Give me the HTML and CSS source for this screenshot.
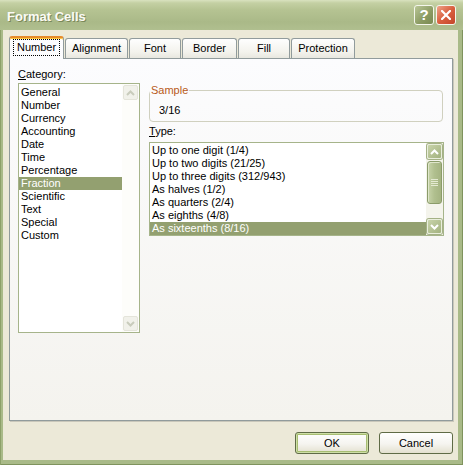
FILE: index.html
```html
<!DOCTYPE html>
<html>
<head>
<meta charset="utf-8">
<title>Format Cells</title>
<link rel="stylesheet" href="styles.css">
</head>
<body>
<div class="window">
  <div class="titlebar">
    <span class="title">Format Cells</span>
    <div class="caption-buttons">
      <span class="cap-btn help">?</span>
      <span class="cap-btn close">
        <svg width="10" height="10" viewBox="0 0 10 10"><path d="M1 1 L9 9 M9 1 L1 9" stroke="#fff" stroke-width="2.2" fill="none" stroke-linecap="square"/></svg>
      </span>
    </div>
  </div>
  <div class="client">
    <div class="tabs">
      <div class="tab active tab-number"><span class="focus">Number</span></div>
      <div class="tab tab-alignment">Alignment</div>
      <div class="tab tab-font">Font</div>
      <div class="tab tab-border">Border</div>
      <div class="tab tab-fill">Fill</div>
      <div class="tab tab-protection">Protection</div>
    </div>
    <div class="panel">
      <div class="col-left">
        <div class="label"><u>C</u>ategory:</div>
        <div class="listbox cat-list">
          <ul class="items">
            <li>General</li>
            <li>Number</li>
            <li>Currency</li>
            <li>Accounting</li>
            <li>Date</li>
            <li>Time</li>
            <li>Percentage</li>
            <li class="selected">Fraction</li>
            <li>Scientific</li>
            <li>Text</li>
            <li>Special</li>
            <li>Custom</li>
          </ul>
          <div class="scrollbar disabled">
            <div class="sb-btn"><svg width="9" height="6" viewBox="0 0 9 6"><path d="M1 5 L4.5 1.5 L8 5" fill="none" stroke="#c9ccbc" stroke-width="2"/></svg></div>
            <div class="sb-track"></div>
            <div class="sb-btn"><svg width="9" height="6" viewBox="0 0 9 6"><path d="M1 1 L4.5 4.5 L8 1" fill="none" stroke="#c9ccbc" stroke-width="2"/></svg></div>
          </div>
        </div>
      </div>
      <div class="col-right">
        <fieldset class="sample">
          <legend>Sample</legend>
          <div class="sample-value">3/16</div>
        </fieldset>
        <div class="label type-label"><u>T</u>ype:</div>
        <div class="listbox type-list">
          <ul class="items">
            <li>Up to one digit (1/4)</li>
            <li>Up to two digits (21/25)</li>
            <li>Up to three digits (312/943)</li>
            <li>As halves (1/2)</li>
            <li>As quarters (2/4)</li>
            <li>As eighths (4/8)</li>
            <li class="selected">As sixteenths (8/16)</li>
          </ul>
          <div class="scrollbar enabled">
            <div class="sb-btn"><svg width="9" height="6" viewBox="0 0 9 6"><path d="M1 5 L4.5 1.5 L8 5" fill="none" stroke="#fff" stroke-width="2"/></svg></div>
            <div class="sb-thumb">
              <svg width="7" height="8" viewBox="0 0 7 8"><path d="M0 0.5 H7 M0 2.5 H7 M0 4.5 H7 M0 6.5 H7" stroke="#e4ead2" stroke-width="1"/></svg>
            </div>
            <div class="sb-track"></div>
            <div class="sb-btn"><svg width="9" height="6" viewBox="0 0 9 6"><path d="M1 1 L4.5 4.5 L8 1" fill="none" stroke="#fff" stroke-width="2"/></svg></div>
          </div>
        </div>
      </div>
    </div>
    <div class="footer">
      <button class="btn default">OK</button>
      <button class="btn">Cancel</button>
    </div>
  </div>
</div>
</body>
</html>
```

FILE: styles.css
```css
body {
  margin: 0;
  font-family: "Liberation Sans", Arial, sans-serif;
  font-size: 11px;
  color: #000;
}

.window {
  width: 463px;
  height: 465px;
  display: flex;
  flex-direction: column;
  background: #a9ba88;
  box-shadow: inset 1px 0 0 #8da16a, inset -1px -1px 0 #7f935d;
}

.titlebar {
  height: 30px;
  flex: none;
  display: flex;
  align-items: flex-start;
  background: linear-gradient(#d9e2bf 0, #c4d0a3 3px, #b5c392 10px, #aab988 22px, #b0bf8f 30px);
}

.title {
  margin: 9px 0 0 7px;
  font-weight: bold;
  font-size: 13px;
  line-height: 15px;
  color: #fbfbf6;
  text-shadow: 1px 1px 0 #7a8858;
}

.caption-buttons {
  margin: 5px 7px 0 auto;
  display: flex;
  gap: 2px;
}

.cap-btn {
  width: 20px;
  height: 20px;
  box-sizing: border-box;
  border: 1px solid #f4f6ec;
  border-radius: 3px;
  display: flex;
  align-items: center;
  justify-content: center;
}

.help {
  background: linear-gradient(135deg, #b9c696, #8a9a62 60%, #7a8a52);
  color: #fff;
  font-weight: bold;
  font-size: 15px;
  line-height: 18px;
}

.close {
  background: linear-gradient(135deg, #eea48a, #d9603f 50%, #c4452a);
}

.client {
  flex: 1;
  margin: 0 5px 5px 3px;
  background: #ece9d8;
  padding: 6px 5px 0 6px;
  display: flex;
  flex-direction: column;
}

.tabs {
  display: flex;
  align-items: flex-end;
  height: 23px;
  margin-bottom: -1px;
  gap: 1px;
  flex: none;
}

.tab {
  height: 20px;
  box-sizing: border-box;
  margin-bottom: 1px;
  border: 1px solid #919b9c;
  border-bottom: none;
  border-radius: 3px 3px 0 0;
  background: linear-gradient(#fefefe, #f3f2ec 70%, #e8e7df);
  padding-top: 3px;
  text-align: center;
  line-height: 13px;
}

.tab.active {
  height: 23px;
  margin-bottom: 0;
  border-top: 2px solid #e68b2c;
  box-shadow: inset 0 1px 0 #ffc73c;
  background: #fcfcfe;
  padding-top: 3px;
  position: relative;
  z-index: 1;
}

.focus {
  display: inline-block;
  padding: 0 2px;
  outline: 1px dotted #000;
  outline-offset: 1px;
}

.tab-number { width: 55px; }
.tab-alignment { width: 63px; }
.tab-font { width: 52px; }
.tab-border { width: 55px; }
.tab-fill { width: 52px; }
.tab-protection { width: 64px; }

.panel {
  height: 363px;
  flex: none;
  box-sizing: border-box;
  border: 1px solid #919b9c;
  background: linear-gradient(#fcfcfe, #f4f3ee);
  box-shadow: 1px 1px 0 #c9c7ba;
  display: flex;
  gap: 9px;
  padding: 9px 8px 0 8px;
}

.col-left {
  width: 122px;
  display: flex;
  flex-direction: column;
}

.col-right {
  width: 295px;
  display: flex;
  flex-direction: column;
}

.label {
  line-height: 13px;
}

.listbox {
  box-sizing: border-box;
  border: 1px solid #a6b48a;
  background: #fff;
  display: flex;
}

.cat-list {
  margin-top: 2px;
  height: 250px;
}

.items {
  list-style: none;
  margin: 0;
  padding: 2px 0 0 0;
  flex: 1;
}

.items li {
  line-height: 13px;
  padding-left: 2px;
  white-space: nowrap;
}

.items li.selected {
  background: #93a070;
  color: #fff;
}

.sample {
  margin: 16px 0 0 0;
  width: 294px;
  box-sizing: border-box;
  border: 1px solid #d0d0bf;
  border-radius: 4px;
  padding: 7px 0 4px 0;
  min-inline-size: 0;
}

.sample legend {
  padding: 0 1px;
  margin-left: 0;
  color: #b85a20;
  line-height: 13px;
}

.sample-value {
  padding-left: 9px;
  line-height: 13px;
}

.type-label {
  margin-top: 3px;
}

.type-list {
  margin-top: 4px;
  height: 94px;
}

.type-list .items {
  padding-top: 1px;
}

.scrollbar {
  width: 17px;
  flex: none;
  display: flex;
  flex-direction: column;
}

.sb-btn {
  margin: 1px;
  height: 15px;
  box-sizing: border-box;
  border-radius: 2px;
  display: flex;
  align-items: center;
  justify-content: center;
  flex: none;
}

.sb-track {
  flex: 1;
}

.scrollbar.disabled {
  background: #fdfdfa;
}

.scrollbar.disabled .sb-btn {
  background: #f1f1ea;
  border: 1px solid #e4e4da;
}

.scrollbar.enabled {
  background: #f4f4ec;
}

.scrollbar.enabled .sb-btn {
  background: linear-gradient(135deg, #c8d3aa, #a3b27f);
  border: 1px solid #e9eedc;
  box-shadow: 0 0 0 1px #a4b185;
}

.sb-thumb {
  margin: 1px;
  height: 43px;
  box-sizing: border-box;
  border: 1px solid #8b9c6a;
  border-radius: 3px;
  background: linear-gradient(90deg, #c7d3a9, #b0bf8e 50%, #a5b482);
  box-shadow: inset 1px 1px 0 #dfe6cb;
  display: flex;
  align-items: center;
  justify-content: center;
  flex: none;
}

.footer {
  display: flex;
  justify-content: flex-end;
  gap: 10px;
  margin-top: 11px;
}

.btn {
  width: 74px;
  height: 22px;
  box-sizing: border-box;
  border: 1px solid #5f6b46;
  border-radius: 3px;
  background: linear-gradient(#ffffff, #f5f4ef 55%, #e3e0cf);
  font-family: "Liberation Sans", Arial, sans-serif;
  font-size: 11px;
  color: #000;
  padding: 0;
}

.btn.default {
  box-shadow: inset 0 0 0 1px #cedfa6, inset 0 0 0 2px #a7bd72;
}
```
